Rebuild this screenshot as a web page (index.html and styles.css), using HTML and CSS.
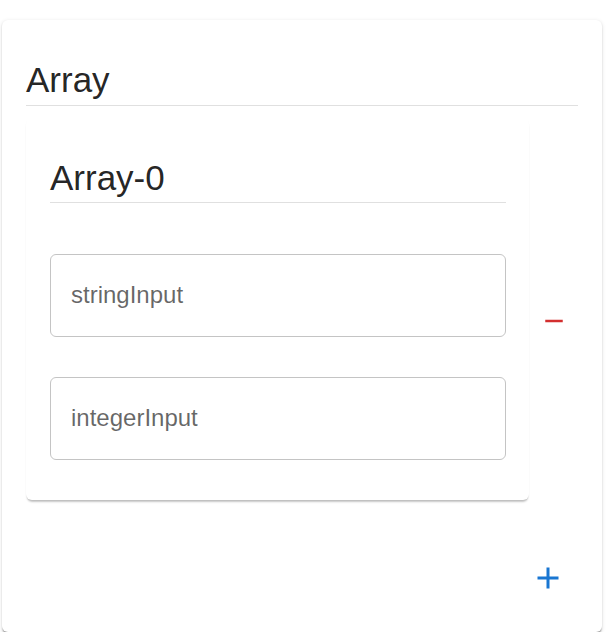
FILE: index.html
```html
<!DOCTYPE html>
<html>
<head>
<meta charset="utf-8">
<link rel="stylesheet" href="styles.css">
</head>
<body>
<div class="card outer">
  <div class="title">Array</div>
  <div class="item-row">
    <div class="card inner">
      <div class="title sub">Array-0</div>
      <div class="field first"><span class="label">stringInput</span></div>
      <div class="field"><span class="label">integerInput</span></div>
    </div>
    <div class="side">
      <svg class="icon remove" viewBox="0 0 24 24" width="30" height="30"><path d="M19 13H5v-2h14v2z"/></svg>
    </div>
  </div>
  <div class="footer">
    <div class="add-btn">
      <svg class="icon add" viewBox="0 0 24 24" width="36" height="36"><path d="M19 13h-6v6h-2v-6H5v-2h6V5h2v6h6v2z"/></svg>
    </div>
  </div>
</div>
</body>
</html>
```
FILE: styles.css
```css
html, body {
  margin: 0;
  padding: 0;
  background: #ffffff;
}
body {
  font-family: "Liberation Sans", Arial, sans-serif;
  color: rgba(0, 0, 0, 0.87);
}
.card {
  background: #ffffff;
  border-radius: 6px;
  box-sizing: border-box;
}
.outer {
  margin: 20px 0 0 2px;
  width: 600px;
  padding: 40px 24px 24px 24px;
  box-shadow: 0 3px 1.5px -1.5px rgba(0,0,0,0.2), 0 1.5px 1.5px 0 rgba(0,0,0,0.14), 0 1.5px 4.5px 0 rgba(0,0,0,0.12);
}
.title {
  font-size: 35px;
  line-height: 40px;
  height: 40px;
  padding-bottom: 5px;
  border-bottom: 1px solid #e0e0e0;
}
.title.sub {
  padding-bottom: 4px;
}
.item-row {
  display: grid;
  grid-template-columns: 503px 49px;
  margin-top: 12px;
}
.inner {
  padding: 40px 23px 40px 24px;
  box-shadow: 0 3px 2px -1px rgba(0,0,0,0.22), 0 1px 1px 0 rgba(0,0,0,0.05);
}
.field {
  height: 83px;
  box-sizing: border-box;
  border: 1px solid #c4c4c4;
  border-radius: 6px;
  display: flex;
  align-items: center;
  padding-left: 20px;
  margin-top: 40px;
}
.field.first {
  margin-top: 51px;
}
.label {
  font-size: 24px;
  color: rgba(0, 0, 0, 0.6);
  position: relative;
  top: -1px;
}
.side {
  display: flex;
  justify-content: center;
  align-items: flex-start;
}
.icon {
  display: block;
}
.remove {
  margin-top: 188px;
  fill: #d32f2f;
}
.footer {
  display: flex;
  justify-content: flex-end;
  margin-top: 48px;
}
.add-btn {
  width: 60px;
  height: 60px;
  display: flex;
  align-items: center;
  justify-content: center;
}
.add {
  fill: #1976d2;
}
```
